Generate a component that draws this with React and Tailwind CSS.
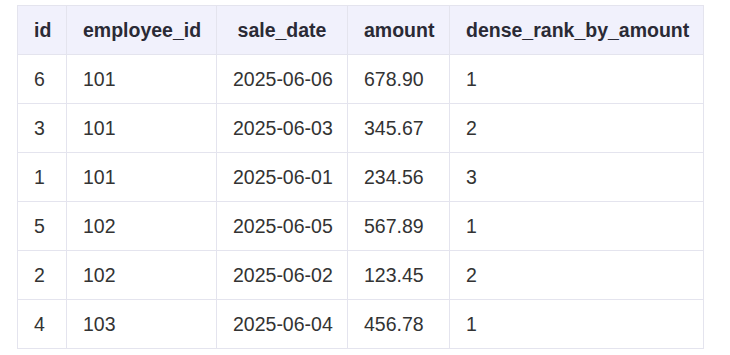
const COLUMNS = [
  { name: 'id', width: 'w-[49px]' },
  { name: 'employee_id', width: 'w-[150px]' },
  { name: 'sale_date', width: 'w-[131px]' },
  { name: 'amount', width: 'w-[102px]' },
  { name: 'dense_rank_by_amount', width: 'w-[254px]' },
]

const ROWS = [
  ['6', '101', '2025-06-06', '678.90', '1'],
  ['3', '101', '2025-06-03', '345.67', '2'],
  ['1', '101', '2025-06-01', '234.56', '3'],
  ['5', '102', '2025-06-05', '567.89', '1'],
  ['2', '102', '2025-06-02', '123.45', '2'],
  ['4', '103', '2025-06-04', '456.78', '1'],
]

export default function App() {
  return (
    <div className="min-h-screen bg-white pl-[17px] pt-[5px] font-['Liberation_Sans',Arial,sans-serif] text-[19.5px] text-[#333]">
      <table className="w-[687px] table-fixed border-collapse">
        <thead>
          <tr className="bg-[#f1f1fc]">
            {COLUMNS.map((col) => (
              <th
                key={col.name}
                className={`${col.width} whitespace-nowrap border border-[#e4e4ee] px-4 py-3 text-center font-bold leading-6 text-[#2a2a35]`}
              >
                {col.name}
              </th>
            ))}
          </tr>
        </thead>
        <tbody>
          {ROWS.map((row, i) => (
            <tr key={i}>
              {row.map((cell, j) => (
                <td key={j} className="whitespace-nowrap border border-[#e4e4ee] px-4 py-3 text-left leading-6">
                  {cell}
                </td>
              ))}
            </tr>
          ))}
        </tbody>
      </table>
    </div>
  )
}
